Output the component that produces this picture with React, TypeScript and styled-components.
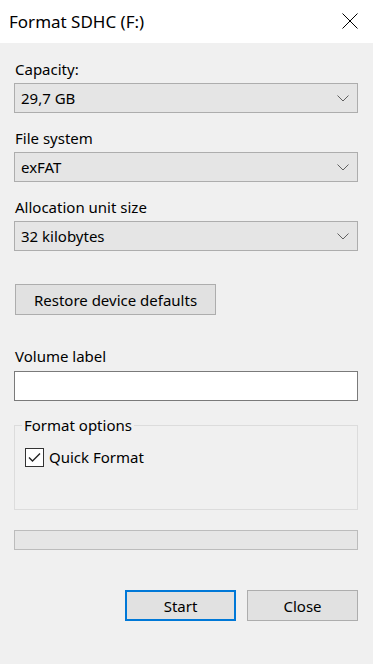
import React from 'react'
import styled, { createGlobalStyle } from 'styled-components'

const GlobalStyle = createGlobalStyle`
  html, body {
    margin: 0;
    padding: 0;
    background: #f0f0f0;
  }
  body {
    font-family: "Noto Sans", "Open Sans", sans-serif;
    color: #000;
  }
`

function Chevron() {
  return (
    <svg width="12" height="7" viewBox="0 0 12 7">
      <polyline points="0.5,0.5 6,6 11.5,0.5" fill="none" stroke="#606060" strokeWidth="1" />
    </svg>
  )
}

function CloseGlyph() {
  return (
    <svg width="16" height="16" viewBox="0 0 16 16">
      <path d="M0.5 0.5 L15.5 15.5 M15.5 0.5 L0.5 15.5" stroke="#000" strokeWidth="1" fill="none" />
    </svg>
  )
}

function CheckGlyph() {
  return (
    <svg width="13" height="11" viewBox="0 0 13 11">
      <polyline points="1,5.5 4.5,9 12,1.5" fill="none" stroke="#222" strokeWidth="1.4" />
    </svg>
  )
}

function Dropdown({ value }: { value: string }) {
  return (
    <Select>
      <span>{value}</span>
      <Chevron />
    </Select>
  )
}

function App() {
  return (
    <Window>
      <GlobalStyle />
      <TitleBar>
        <Title>Format SDHC (F:)</Title>
        <CloseButton>
          <CloseGlyph />
        </CloseButton>
      </TitleBar>
      <Body>
        <Label>Capacity:</Label>
        <Dropdown value="29,7 GB" />
        <Label $top={15}>File system</Label>
        <Dropdown value="exFAT" />
        <Label $top={15}>Allocation unit size</Label>
        <Dropdown value="32 kilobytes" />
        <RestoreButton>Restore device defaults</RestoreButton>
        <Label $top={31}>Volume label</Label>
        <TextBox />
        <Options>
          <Legend>Format options</Legend>
          <CheckRow>
            <CheckBox>
              <CheckGlyph />
            </CheckBox>
            <span>Quick Format</span>
          </CheckRow>
        </Options>
        <Progress />
        <ButtonRow>
          <DialogButton $primary>Start</DialogButton>
          <DialogButton>Close</DialogButton>
        </ButtonRow>
      </Body>
    </Window>
  )
}

export default App

// styles

const Window = styled.div`
  width: 373px;
  height: 664px;
  display: flex;
  flex-direction: column;
  background: #f0f0f0;
`

const TitleBar = styled.div`
  height: 43px;
  background: #fff;
  display: flex;
  align-items: center;
  justify-content: space-between;
  padding: 0 15px 0 9px;
  box-sizing: border-box;
`

const Title = styled.div`
  font-size: 17px;
  margin-top: -1px;
`

const CloseButton = styled.div`
  display: flex;
  margin-top: -1px;
`

const Body = styled.div`
  display: flex;
  flex-direction: column;
  padding: 16px 15px 0 14px;
  font-size: 15px;
`

const Label = styled.div<{ $top?: number }>`
  line-height: 20px;
  margin: ${(p) => p.$top ?? 0}px 0 4px 1px;
`

const Select = styled.div`
  height: 30px;
  box-sizing: border-box;
  border: 1px solid #adadad;
  background: #e5e5e5;
  display: flex;
  align-items: center;
  justify-content: space-between;
  padding: 0 8px 0 6px;
  line-height: 20px;
`

const RestoreButton = styled.div`
  margin: 33px 0 0 1px;
  width: 201px;
  height: 31px;
  box-sizing: border-box;
  border: 1px solid #adadad;
  background: #e1e1e1;
  display: flex;
  align-items: center;
  justify-content: center;
`

const TextBox = styled.div`
  height: 30px;
  box-sizing: border-box;
  border: 1px solid #7a7a7a;
  background: #fff;
  margin-top: 1px;
`

const Options = styled.fieldset`
  margin: 14px 0 0;
  padding: 0 0 42px;
  border: 1px solid #dcdcdc;
  min-width: 0;
`

const Legend = styled.legend`
  margin-left: 7px;
  padding: 0 2px;
  line-height: 20px;
`

const CheckRow = styled.div`
  display: flex;
  align-items: center;
  gap: 5px;
  margin: 12px 0 0 10px;
  line-height: 20px;
`

const CheckBox = styled.div`
  width: 19px;
  height: 19px;
  box-sizing: border-box;
  border: 1px solid #333;
  background: #fff;
  display: flex;
  align-items: center;
  justify-content: center;
`

const Progress = styled.div`
  margin-top: 20px;
  height: 20px;
  box-sizing: border-box;
  border: 1px solid #bcbcbc;
  background: #e6e6e6;
`

const ButtonRow = styled.div`
  display: flex;
  justify-content: flex-end;
  gap: 11px;
  margin-top: 40px;
`

const DialogButton = styled.div<{ $primary?: boolean }>`
  width: 111px;
  height: 31px;
  box-sizing: border-box;
  border: ${(p) => (p.$primary ? '2px solid #0078d7' : '1px solid #adadad')};
  background: #e1e1e1;
  display: flex;
  align-items: center;
  justify-content: center;
`
